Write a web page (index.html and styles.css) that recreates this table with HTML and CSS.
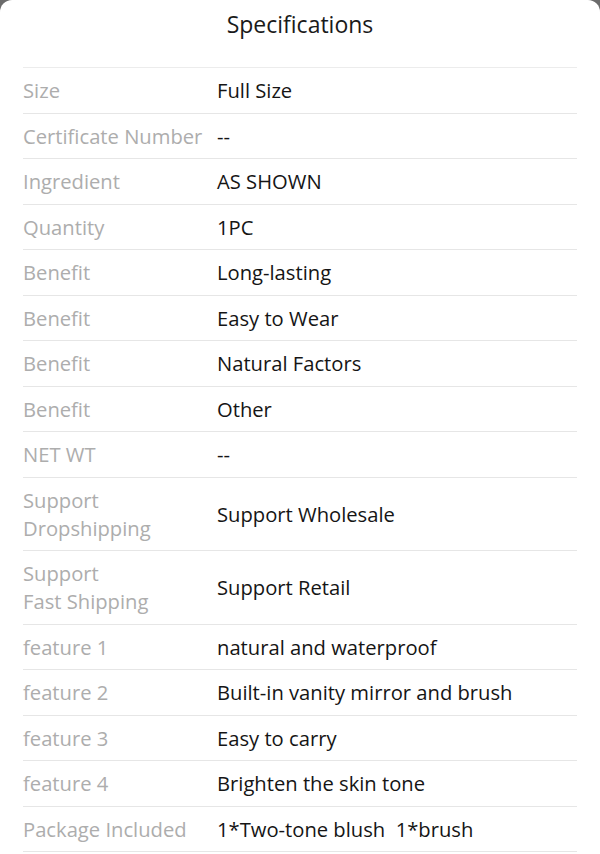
FILE: index.html
```html
<!DOCTYPE html>
<html>
<head>
<meta charset="utf-8">
<link rel="stylesheet" href="styles.css">
</head>
<body>
<div class="sheet">
  <h1 class="title">Specifications</h1>
  <div class="specs">
    <div class="row"><div class="label">Size</div><div class="value">Full Size</div></div>
    <div class="row"><div class="label">Certificate Number</div><div class="value">--</div></div>
    <div class="row"><div class="label">Ingredient</div><div class="value">AS SHOWN</div></div>
    <div class="row"><div class="label">Quantity</div><div class="value">1PC</div></div>
    <div class="row"><div class="label">Benefit</div><div class="value">Long-lasting</div></div>
    <div class="row"><div class="label">Benefit</div><div class="value">Easy to Wear</div></div>
    <div class="row"><div class="label">Benefit</div><div class="value">Natural Factors</div></div>
    <div class="row"><div class="label">Benefit</div><div class="value">Other</div></div>
    <div class="row"><div class="label">NET WT</div><div class="value">--</div></div>
    <div class="row"><div class="label">Support<br>Dropshipping</div><div class="value">Support Wholesale</div></div>
    <div class="row"><div class="label">Support<br>Fast Shipping</div><div class="value">Support Retail</div></div>
    <div class="row"><div class="label">feature 1</div><div class="value">natural and waterproof</div></div>
    <div class="row"><div class="label">feature 2</div><div class="value">Built-in vanity mirror and brush</div></div>
    <div class="row"><div class="label">feature 3</div><div class="value">Easy to carry</div></div>
    <div class="row"><div class="label">feature 4</div><div class="value">Brighten the skin tone</div></div>
    <div class="row"><div class="label">Package Included</div><div class="value">1*Two-tone blush&nbsp; 1*brush</div></div>
  </div>
</div>
</body>
</html>
```
FILE: styles.css
```css
html, body {
  margin: 0;
  padding: 0;
  background: #6b6b6b;
  height: 100%;
  overflow: hidden;
}
body {
  font-family: "Open Sans", "Noto Sans", sans-serif;
}
.sheet {
  background: #fff;
  border-radius: 12px 12px 0 0;
  min-height: 100%;
  padding: 0 23px;
  box-sizing: border-box;
}
.title {
  margin: 0;
  height: 68px;
  box-sizing: border-box;
  padding-top: 7px;
  text-align: center;
  font-size: 23px;
  font-weight: 400;
  line-height: 34px;
  color: #1a1a1a;
  border-bottom: 1px solid #ececec;
}
.row {
  display: flex;
  align-items: center;
  padding: 8.25px 0;
  border-bottom: 1px solid #e6e6e6;
  font-size: 20.2px;
  line-height: 28px;
}
.label {
  width: 194px;
  flex: none;
  color: #adadad;
}
.value {
  color: #151515;
}
```
